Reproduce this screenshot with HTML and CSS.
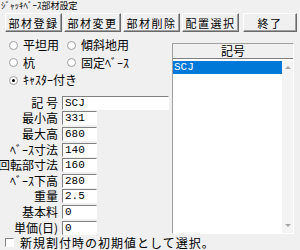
FILE: index.html
```html
<!DOCTYPE html>
<html lang="ja">
<head>
    <meta charset="UTF-8">
    <title>ジャッキベース部材設定</title>
    <link rel="stylesheet" href="styles.css">
</head>
<body>
    <div class="window">
        <div class="title">ｼﾞｬｯｷﾍﾞｰｽ部材設定</div>

        <!-- Top buttons -->
        <div class="toolbar">
            <button class="btn">部材登録</button>
            <button class="btn">部材変更</button>
            <button class="btn">部材削除</button>
            <button class="btn">配置選択</button>
            <button class="btn wide">終了</button>
        </div>

        <div class="main">
            <!-- Left: type + values -->
            <div class="left">
                <div class="radios">
                    <label class="radio"><span class="dot"></span>平坦用</label>
                    <label class="radio"><span class="dot"></span>傾斜地用</label>
                    <label class="radio"><span class="dot"></span>杭</label>
                    <label class="radio"><span class="dot"></span>固定ﾍﾞｰｽ</label>
                    <label class="radio"><span class="dot on"></span>ｷｬｽﾀｰ付き</label>
                </div>

                <div class="fields">
                    <div class="row"><span class="lbl">記 号</span><span class="box long">SCJ</span></div>
                    <div class="row"><span class="lbl">最小高</span><span class="box">331</span></div>
                    <div class="row"><span class="lbl">最大高</span><span class="box">680</span></div>
                    <div class="row"><span class="lbl">ﾍﾞｰｽ寸法</span><span class="box">140</span></div>
                    <div class="row"><span class="lbl">回転部寸法</span><span class="box">160</span></div>
                    <div class="row"><span class="lbl">ﾍﾞｰｽ下高</span><span class="box">280</span></div>
                    <div class="row"><span class="lbl">重量</span><span class="box">2.5</span></div>
                    <div class="row"><span class="lbl">基本料</span><span class="box">0</span></div>
                    <div class="row"><span class="lbl">単価(日)</span><span class="box">0</span></div>
                </div>
            </div>

            <!-- Right: list -->
            <div class="list">
                <div class="list-head">記号</div>
                <div class="list-body">
                    <div class="items">
                        <div class="item selected">SCJ</div>
                    </div>
                    <div class="scroll">
                        <span class="arrow up"></span>
                        <span class="arrow down"></span>
                    </div>
                </div>
            </div>
        </div>

        <label class="check"><span class="cbox"></span>新規割付時の初期値として選択。</label>
    </div>
</body>
</html>
```

FILE: styles.css
```css
body {
    margin: 0;
    background-color: #f0f0f0;
    font-family: "Noto Sans CJK JP", "DejaVu Sans", sans-serif;
    font-size: 12px;
    color: #000;
    white-space: nowrap;
}
.window {
    width: 300px;
    height: 250px;
    overflow: hidden;
}
.title {
    height: 12px;
    font-size: 9px;
    line-height: 12px;
    padding-left: 1px;
}
.toolbar {
    display: flex;
    gap: 2px;
    padding: 1px 0 0 5px;
}
.btn {
    width: 57px;
    height: 19px;
    padding: 0;
    font-family: inherit;
    font-size: 11px;
    letter-spacing: 1.5px;
    line-height: 14px;
    white-space: nowrap;
    color: #000;
    background-color: #f0f0f0;
    border: 1px solid;
    border-color: #fff #696969 #696969 #fff;
    box-shadow: inset -1px -1px 0 #a0a0a0;
}
.btn.wide {
    width: 54px;
    margin-left: 2px;
}
.main {
    display: flex;
    margin-top: 6px;
}
.left {
    width: 172px;
}
.radios {
    display: grid;
    grid-template-columns: 58px 60px;
    row-gap: 3.5px;
    padding-left: 9px;
}
.radio {
    display: flex;
    align-items: center;
    height: 14px;
    line-height: 14px;
}
.dot {
    flex: none;
    width: 9px;
    height: 9px;
    border-radius: 50%;
    border: 1px solid #a0a0a0;
    background-color: #fff;
    box-sizing: border-box;
    margin-right: 5px;
    position: relative;
}
.dot.on::after {
    content: "";
    position: absolute;
    left: 2px;
    top: 2px;
    width: 3px;
    height: 3px;
    border-radius: 50%;
    background-color: #000;
}
.fields {
    margin-top: 8px;
}
.row {
    display: flex;
    align-items: center;
    height: 15.6px;
}
.lbl {
    flex: none;
    width: 62px;
    display: flex;
    justify-content: flex-end;
    padding-right: 4px;
    box-sizing: border-box;
    line-height: 14px;
}
.box {
    flex: none;
    width: 35px;
    height: 14px;
    box-sizing: border-box;
    border: 1px solid;
    border-color: #808080 #fff #fff #808080;
    background-color: #fff;
    font-family: "Liberation Mono", monospace;
    font-size: 11px;
    line-height: 12px;
    padding-left: 2px;
}
.box.long {
    width: 107px;
}
.list {
    width: 122px;
    height: 191px;
    margin-top: 5px;
    box-sizing: border-box;
    border: 1px solid;
    border-color: #a0a0a0 #fff #fff #a0a0a0;
    display: flex;
    flex-direction: column;
}
.list-head {
    height: 14px;
    line-height: 14px;
    text-align: center;
    border-bottom: 1px solid #808080;
    background-color: #f0f0f0;
}
.list-body {
    flex: 1;
    display: flex;
    background-color: #fff;
    padding-top: 2px;
}
.items {
    flex: 1;
}
.item {
    height: 13px;
    line-height: 13px;
    font-family: "Liberation Mono", monospace;
    font-size: 11px;
    padding-left: 1px;
}
.item.selected {
    background-color: #0078d7;
    color: #fff;
}
.scroll {
    width: 11px;
    display: flex;
    flex-direction: column;
    justify-content: space-between;
    align-items: center;
    padding: 5px 0 6px;
    background-color: #f4f4f4;
}
.arrow {
    width: 0;
    height: 0;
    border-left: 3px solid transparent;
    border-right: 3px solid transparent;
}
.arrow.up {
    border-bottom: 3px solid #a6a6a6;
}
.arrow.down {
    border-top: 3px solid #a6a6a6;
}
.check {
    display: flex;
    align-items: center;
    padding-left: 5px;
    height: 14px;
    letter-spacing: 1px;
}
.cbox {
    flex: none;
    width: 9px;
    height: 9px;
    box-sizing: border-box;
    border: 1px solid;
    border-color: #808080 #fff #fff #808080;
    background-color: #fff;
    margin-right: 6px;
}
```
